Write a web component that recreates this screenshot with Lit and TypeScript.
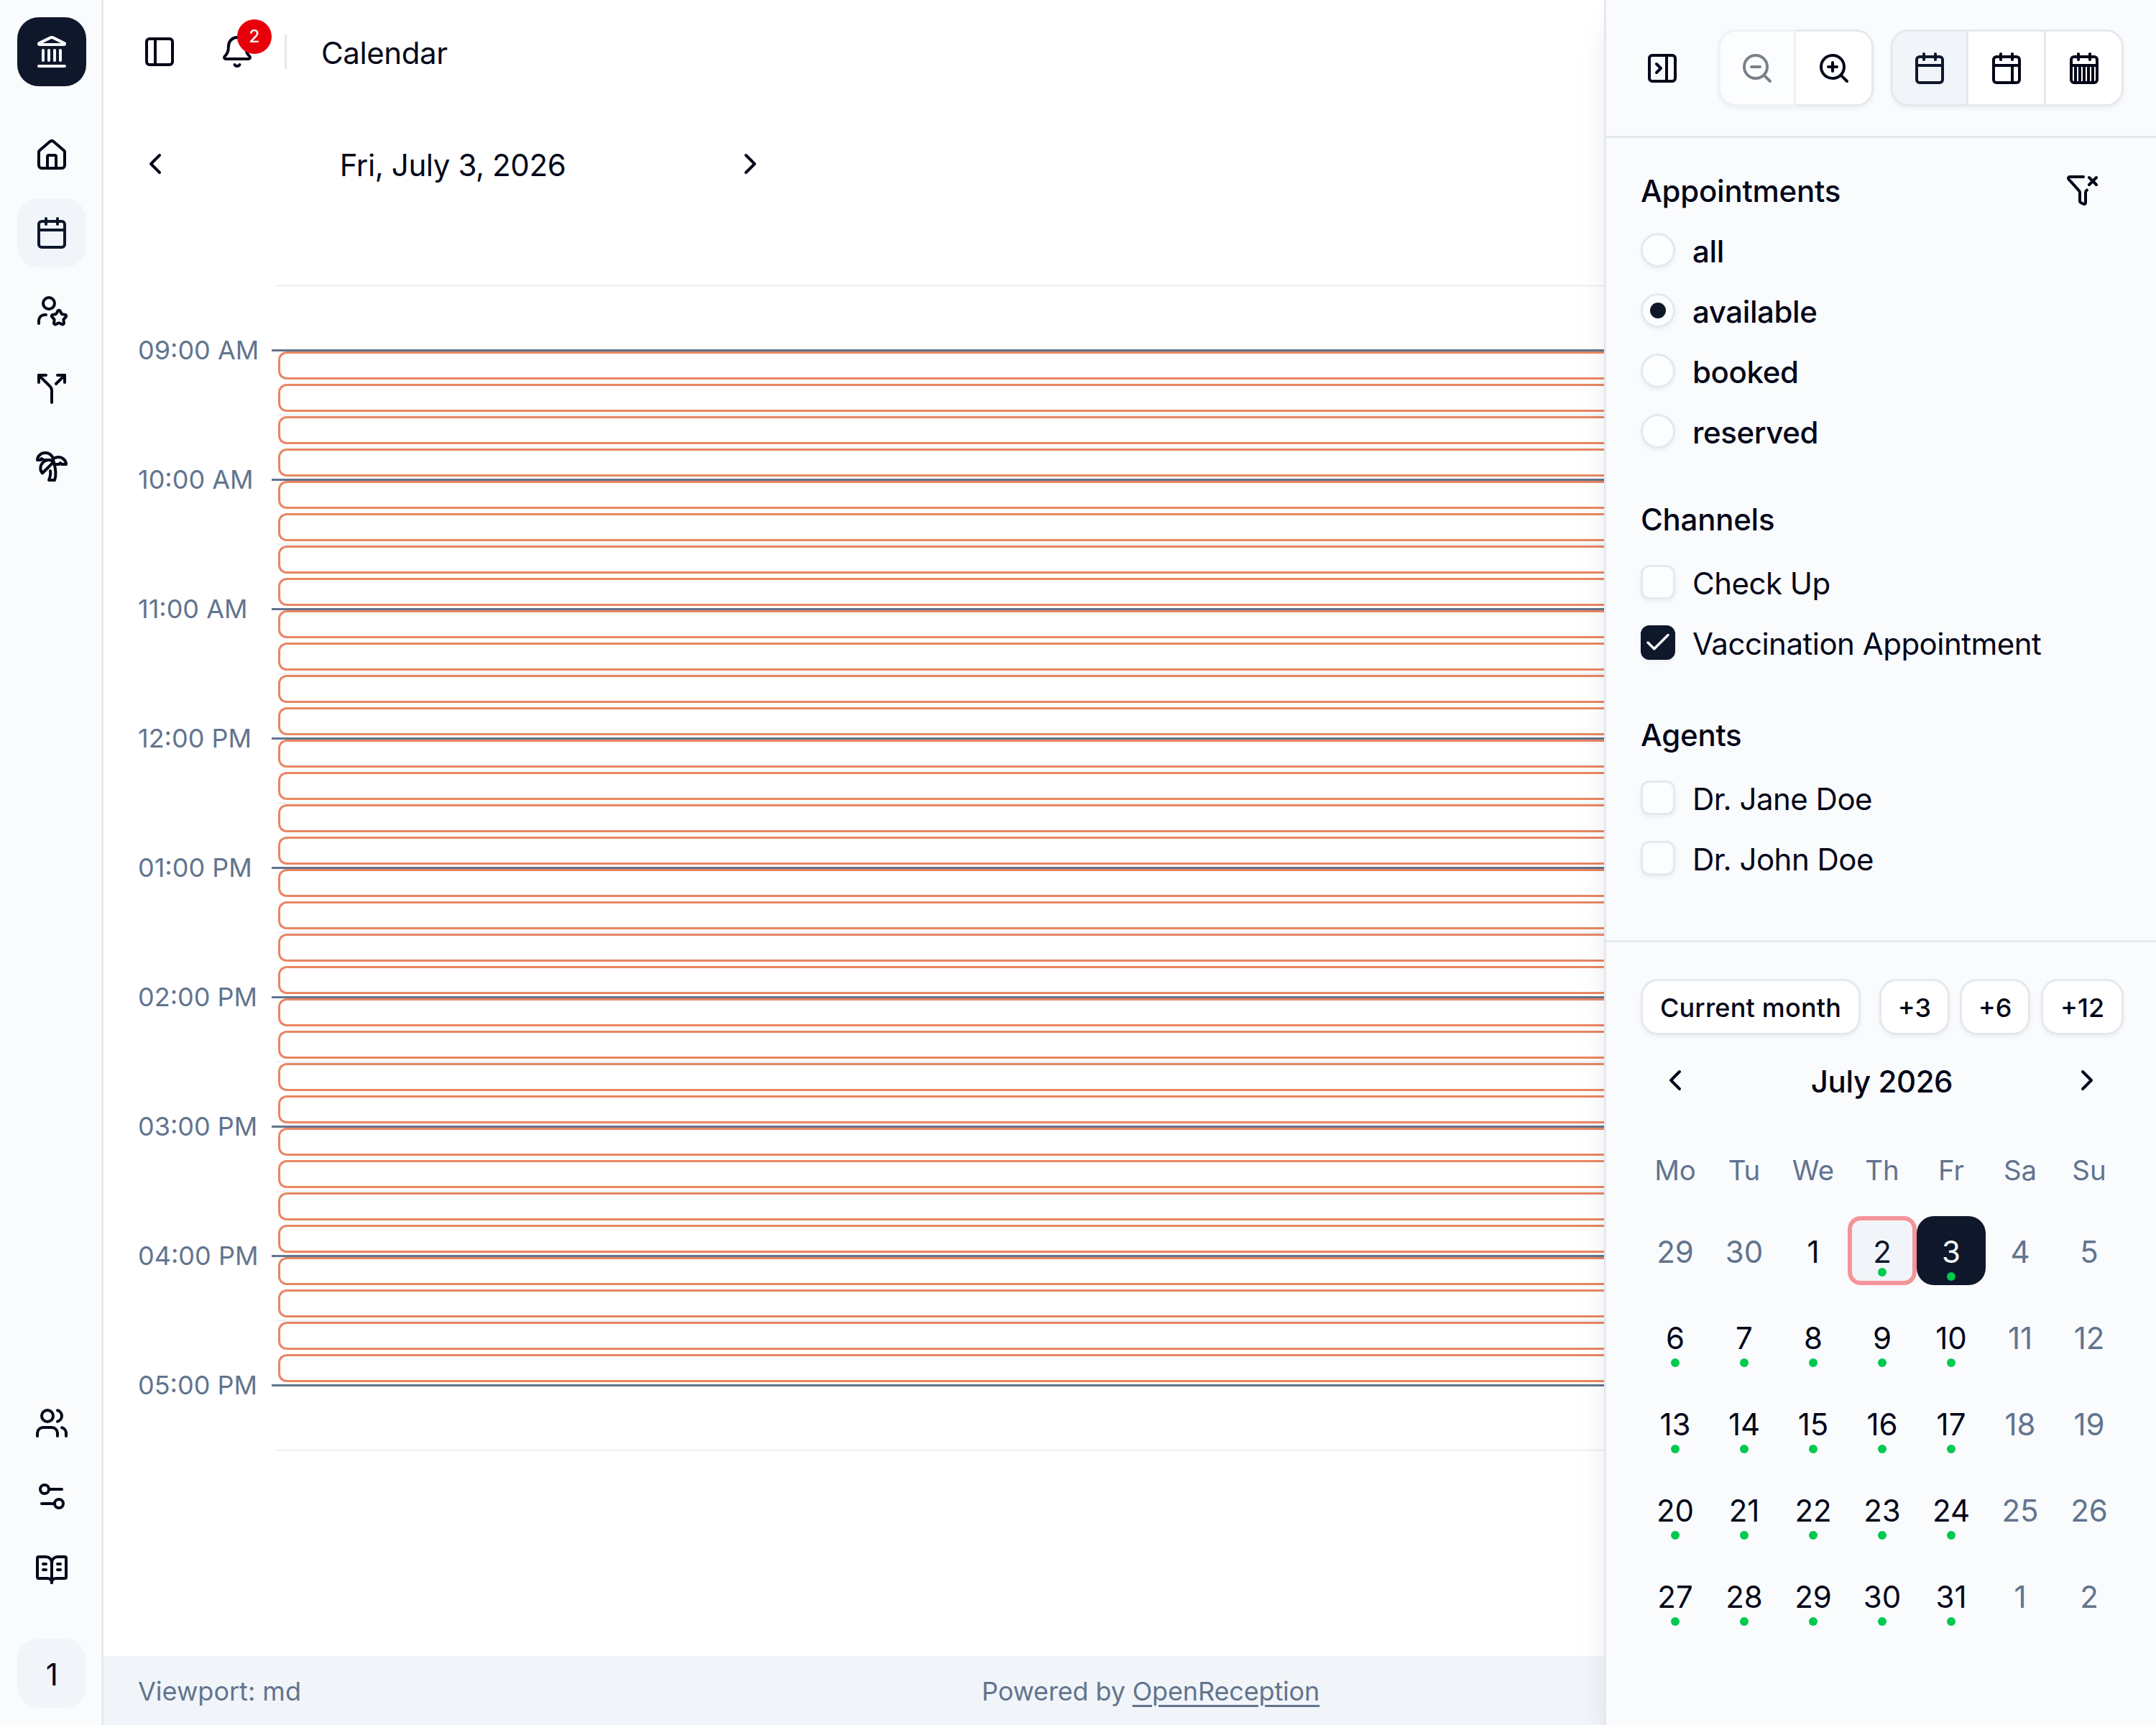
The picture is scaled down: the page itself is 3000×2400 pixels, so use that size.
import { LitElement, html, svg, css, nothing, type SVGTemplateResult } from 'lit';
import { customElement, property } from 'lit/decorators.js';
import { classMap } from 'lit/directives/class-map.js';

const ICONS: Record<string, SVGTemplateResult> = {
  landmark: svg`<path d="M10 18v-7M14 18v-7M18 18v-7M6 18v-7M3 22h18"/><path d="M11.12 2.198a2 2 0 0 1 1.76.006l7.866 3.847c.476.233.31.949-.22.949H3.474c-.53 0-.695-.716-.22-.949z"/>`,
  home: svg`<path d="M15 21v-8a1 1 0 0 0-1-1h-4a1 1 0 0 0-1 1v8"/><path d="M3 10a2 2 0 0 1 .709-1.528l7-5.999a2 2 0 0 1 2.582 0l7 5.999A2 2 0 0 1 21 10v9a2 2 0 0 1-2 2H5a2 2 0 0 1-2-2z"/>`,
  calendar: svg`<path d="M8 2v4M16 2v4M3 10h18"/><rect width="18" height="18" x="3" y="4" rx="2"/>`,
  calendarWeek: svg`<path d="M8 2v4M16 2v4M3 10h18M16 10v12"/><rect width="18" height="18" x="3" y="4" rx="2"/>`,
  calendarMonth: svg`<path d="M8 2v4M16 2v4M3 10h18M6 10v12M9 10v12M12 10v12M15 10v12M18 10v12"/><rect width="18" height="18" x="3" y="4" rx="2"/>`,
  userStar: svg`<path d="M16.051 12.616a1 1 0 0 1 1.909.024l.737 1.452a1 1 0 0 0 .737.535l1.634.256a1 1 0 0 1 .588 1.806l-1.172 1.168a1 1 0 0 0-.282.866l.259 1.613a1 1 0 0 1-1.541 1.134l-1.465-.75a1 1 0 0 0-.912 0l-1.465.75a1 1 0 0 1-1.539-1.133l.258-1.613a1 1 0 0 0-.282-.866l-1.156-1.153a1 1 0 0 1 .572-1.822l1.633-.256a1 1 0 0 0 .737-.535z"/><path d="M8 15H7a4 4 0 0 0-4 4v2"/><circle cx="10" cy="7" r="4"/>`,
  split: svg`<path d="M16 3h5v5M8 3H3v5"/><path d="M12 22v-8.3a4 4 0 0 0-1.172-2.872L3 3M15 9l6-6"/>`,
  palm: svg`<path d="M13 8c0-2.76-2.46-5-5.5-5S2 5.24 2 8h2l1-1 1 1h4"/><path d="M13 7.14A5.82 5.82 0 0 1 16.5 6c3.04 0 5.5 2.24 5.5 5h-3l-1-1-1 1h-3"/><path d="M5.89 9.71c-2.15 2.15-2.3 5.47-.35 7.43l4.24-4.25.7-.7.71-.71 2.12-2.12c-1.95-1.96-5.27-1.8-7.42.35"/><path d="M11 15.5c.5 2.5-.17 4.5-1 6.5h4c2-5.5-.5-12-1-14"/>`,
  users: svg`<path d="M16 21v-2a4 4 0 0 0-4-4H6a4 4 0 0 0-4 4v2M16 3.128a4 4 0 0 1 0 7.744M22 21v-2a4 4 0 0 0-3-3.87"/><circle cx="9" cy="7" r="4"/>`,
  settings: svg`<path d="M14 17H5M19 7h-9"/><circle cx="17" cy="17" r="3"/><circle cx="7" cy="7" r="3"/>`,
  book: svg`<path d="M12 7v14M16 12h2M16 8h2M6 12h2M6 8h2"/><path d="M3 18a1 1 0 0 1-1-1V4a1 1 0 0 1 1-1h5a4 4 0 0 1 4 4 4 4 0 0 1 4-4h5a1 1 0 0 1 1 1v13a1 1 0 0 1-1 1h-6a3 3 0 0 0-3 3 3 3 0 0 0-3-3z"/>`,
  panelLeft: svg`<rect width="18" height="18" x="3" y="3" rx="2"/><path d="M9 3v18"/>`,
  panelClose: svg`<rect width="18" height="18" x="3" y="3" rx="2"/><path d="M15 3v18M8 9l3 3-3 3"/>`,
  bell: svg`<path d="M10.268 21a2 2 0 0 0 3.464 0"/><path d="M3.262 15.326A1 1 0 0 0 4 17h16a1 1 0 0 0 .74-1.673C19.41 13.956 18 12.499 18 8A6 6 0 0 0 6 8c0 4.499-1.411 5.956-2.738 7.326"/>`,
  left: svg`<path d="m15 18-6-6 6-6"/>`,
  right: svg`<path d="m9 18 6-6-6-6"/>`,
  zoomOut: svg`<circle cx="11" cy="11" r="8"/><path d="M21 21l-4.35-4.35M8 11h6"/>`,
  zoomIn: svg`<circle cx="11" cy="11" r="8"/><path d="M21 21l-4.35-4.35M11 8v6M8 11h6"/>`,
  funnelX: svg`<path d="M12.531 3H3a1 1 0 0 0-.742 1.67l7.225 7.989A2 2 0 0 1 10 14v6a1 1 0 0 0 .553.895l2 1A1 1 0 0 0 14 21v-7a2 2 0 0 1 .517-1.341l.427-.473"/><path d="m16.5 3.5 5 5M21.5 3.5l-5 5"/>`,
  check: svg`<path d="M20 6 9 17l-5-5"/>`,
};

const icon = (name: string) => html`<svg class="icon" viewBox="0 0 24 24" fill="none" stroke="currentColor" stroke-width="2" stroke-linecap="round" stroke-linejoin="round">${ICONS[name]}</svg>`;

const base = css`
  * { box-sizing: border-box; }
  :host { color: #020618; font-family: Inter, "Liberation Sans", sans-serif; }
  .icon { display: block; width: 48px; height: 48px; flex: none; }
  .md { font-size: 42px; line-height: 60px; padding-top: 3px; white-space: nowrap; letter-spacing: -0.4px; }
  .sm { font-size: 36px; line-height: 48px; white-space: nowrap; letter-spacing: 0; }
`;

@customElement('app-sidebar')
class AppSidebar extends LitElement {
  static styles = [base, css`
    :host { display: flex; flex-direction: column; width: 144px; height: 2400px; padding: 24px 0 24px 24px; background: #f9fbfd; border-right: 3px solid #e5e9ee; }
    .tile { width: 96px; height: 96px; border-radius: 30px; display: flex; align-items: center; justify-content: center; }
    .brand { background: #0f172b; color: #f8fafc; margin-bottom: 48px; }
    .nav { display: flex; flex-direction: column; gap: 12px; }
    .active { background: #f1f5f9; color: #0f172b; }
    .tools { display: flex; flex-direction: column; gap: 6px; margin-top: auto; margin-bottom: 48px; }
    .tenant { background: #f1f5f9; }
  `];
  render() {
    return html`
      <div class="tile brand">${icon('landmark')}</div>
      <nav class="nav">
        ${['home', 'calendar', 'userStar', 'split', 'palm'].map(
          (n) => html`<div class=${classMap({ tile: true, active: n === 'calendar' })}>${icon(n)}</div>`,
        )}
      </nav>
      <div class="tools">${['users', 'settings', 'book'].map((n) => html`<div class="tile">${icon(n)}</div>`)}</div>
      <div class="tile tenant"><span class="md">1</span></div>
    `;
  }
}

const HOURS = ['09:00 AM', '10:00 AM', '11:00 AM', '12:00 PM', '01:00 PM', '02:00 PM', '03:00 PM', '04:00 PM', '05:00 PM'];

@customElement('day-schedule')
class DaySchedule extends LitElement {
  static styles = [base, css`
    :host { display: flex; padding: 84px 0 0 48px; overflow: hidden; }
    .labels { width: 186px; flex: none; padding-top: 67px; }
    .label { height: 180px; color: #62748e; }
    .lanes { flex: 1; padding-left: 6px; }
    .half { height: 90px; border-top: 3px solid #f1f3f6; display: flex; flex-direction: column; gap: 6px; }
    .hour { border-top-color: #62748e; margin-left: -6px; padding-left: 6px; }
    .slot { height: 39px; flex: none; margin-left: 3px; border: 3px solid #e98662; border-right: 0; border-radius: 12px 0 0 12px; background: #fff; }
  `];
  render() {
    const slots = html`<div class="slot"></div><div class="slot"></div>`;
    return html`
      <div class="labels">${HOURS.map((h) => html`<div class="label sm">${h}</div>`)}</div>
      <div class="lanes">
        <div class="half"></div>
        ${HOURS.map((_, i) => {
          const open = i < HOURS.length - 1;
          return html`<div class="half hour">${open ? slots : nothing}</div><div class="half">${open ? slots : nothing}</div>`;
        })}
      </div>
    `;
  }
}

@customElement('filter-option')
class FilterOption extends LitElement {
  @property() kind = 'check';
  @property() label = '';
  @property({ type: Boolean }) on = false;
  static styles = [base, css`
    :host { display: flex; align-items: center; gap: 24px; height: 48px; }
    .box { width: 48px; height: 48px; flex: none; border: 3px solid #e5e9ee; border-radius: 12px; background: #fcfdfe; box-shadow: 0 3px 6px rgba(0, 0, 0, 0.05); display: flex; align-items: center; justify-content: center; }
    .radio { border-radius: 50%; }
    .ticked { background: #0f172b; border-color: #0f172b; color: #f8fafc; }
    .box .icon { width: 42px; height: 42px; }
    .dot { width: 22px; height: 22px; border-radius: 50%; background: #0f172b; }
    .md { padding-top: 4px; letter-spacing: -0.5px; }
    .strong { font-weight: 500; letter-spacing: -0.4px; }
  `];
  render() {
    const radio = this.kind === 'radio';
    return html`
      <span class=${classMap({ box: true, radio, ticked: this.on && !radio })}>
        ${this.on ? (radio ? html`<span class="dot"></span>` : icon('check')) : nothing}
      </span>
      <span class=${classMap({ md: true, strong: radio })}>${this.label}</span>
    `;
  }
}

@customElement('month-picker')
class MonthPicker extends LitElement {
  static styles = [base, css`
    :host { display: block; padding: 51px 45px 0 48px; }
    .shortcuts { display: flex; gap: 14px; }
    .btn { height: 78px; width: 98px; flex: none; border: 3px solid #e5e9ee; border-radius: 24px; background: #fff; box-shadow: 0 3px 6px rgba(0, 0, 0, 0.05); display: flex; align-items: center; justify-content: center; font-weight: 500; padding-top: 1px; }
    .wide { width: 306px; margin-right: 12px; letter-spacing: 0.2px; }
    .last { width: 115px; margin-left: 1px; }
    .nav { display: flex; justify-content: space-between; align-items: center; height: 48px; margin-top: 39px; padding: 0 27px 0 24px; }
    .nav .md { font-weight: 500; padding-left: 2px; }
    .week { display: grid; grid-template-columns: repeat(7, 96px); justify-items: center; margin-top: 77px; font-size: 38.4px; line-height: 48px; color: #62748e; }
    .days { display: grid; grid-template-columns: repeat(7, 96px); grid-auto-rows: 96px; row-gap: 24px; margin-top: 40px; }
    .day { position: relative; display: flex; align-items: center; justify-content: center; letter-spacing: 0; padding-top: 4px; }
    .muted { color: #62748e; }
    .today { background: #f1f5f9; color: #0f172b; border: 6px solid #f49499; border-radius: 18px; }
    .picked { background: #0f172b; color: #f8fafc; border-radius: 24px; }
    .dot { position: absolute; left: 50%; bottom: 6px; width: 12px; height: 12px; margin-left: -6px; border-radius: 50%; background: #00c950; }
  `];
  render() {
    const days = [29, 30, ...Array.from({ length: 31 }, (_, i) => i + 1), 1, 2];
    return html`
      <div class="shortcuts">
        <div class="btn sm wide">Current month</div>
        <div class="btn sm">+3</div>
        <div class="btn sm">+6</div>
        <div class="btn sm last">+12</div>
      </div>
      <div class="nav">${icon('left')}<span class="md">July 2026</span>${icon('right')}</div>
      <div class="week">${['Mo', 'Tu', 'We', 'Th', 'Fr', 'Sa', 'Su'].map((d) => html`<span>${d}</span>`)}</div>
      <div class="days">
        ${days.map((d, i) => {
          const muted = i < 2 || i % 7 > 4;
          const cls = { day: true, md: true, muted, today: i === 3, picked: i === 4 };
          return html`<div class=${classMap(cls)}>${d}${!muted && i > 2 ? html`<i class="dot"></i>` : nothing}</div>`;
        })}
      </div>
    `;
  }
}

@customElement('side-panel')
class SidePanel extends LitElement {
  static styles = [base, css`
    :host { display: block; width: 768px; height: 2400px; position: relative; background: #f9fbfd; border-left: 3px solid #e5e9ee; box-shadow: 0 30px 45px -9px rgba(0, 0, 0, 0.1), 0 12px 18px -12px rgba(0, 0, 0, 0.1); }
    .top { height: 192px; border-bottom: 3px solid #e5e9ee; display: flex; align-items: center; gap: 24px; padding-left: 24px; }
    .toggle { width: 108px; display: flex; justify-content: center; }
    .group { display: flex; border-radius: 24px; box-shadow: 0 3px 6px rgba(0, 0, 0, 0.05); }
    .item { width: 108px; height: 107px; display: flex; align-items: center; justify-content: center; background: #fff; border: 3px solid #e5e9ee; border-left-width: 0; }
    .item:first-child { border-left-width: 3px; border-radius: 24px 0 0 24px; }
    .item:last-child { border-radius: 0 24px 24px 0; }
    .off { opacity: 0.5; }
    .sel { background: #f1f5f9; color: #0f172b; }
    .filters { height: 1119px; border-bottom: 3px solid #e5e9ee; padding: 48px 78px 0 48px; }
    .head { display: flex; justify-content: space-between; align-items: center; height: 48px; }
    .head .md { font-weight: 500; letter-spacing: -0.25px; }
    .list { display: flex; flex-direction: column; gap: 36px; margin: 41px 0 79px; }
    .radios { margin: 36px 0 73px; }
  `];
  render() {
    return html`
      <div class="top">
        <div class="toggle">${icon('panelClose')}</div>
        <div class="group">
          <div class="item off">${icon('zoomOut')}</div>
          <div class="item">${icon('zoomIn')}</div>
        </div>
        <div class="group">
          <div class="item sel">${icon('calendar')}</div>
          <div class="item">${icon('calendarWeek')}</div>
          <div class="item">${icon('calendarMonth')}</div>
        </div>
      </div>
      <div class="filters">
        <div class="head"><span class="md">Appointments</span>${icon('funnelX')}</div>
        <div class="list radios">
          ${['all', 'available', 'booked', 'reserved'].map(
            (l) => html`<filter-option kind="radio" label=${l} ?on=${l === 'available'}></filter-option>`,
          )}
        </div>
        <div class="head"><span class="md">Channels</span></div>
        <div class="list">
          <filter-option label="Check Up"></filter-option>
          <filter-option label="Vaccination Appointment" on></filter-option>
        </div>
        <div class="head"><span class="md">Agents</span></div>
        <div class="list">
          <filter-option label="Dr. Jane Doe"></filter-option>
          <filter-option label="Dr. John Doe"></filter-option>
        </div>
      </div>
      <month-picker></month-picker>
    `;
  }
}

@customElement('app-root')
class AppRoot extends LitElement {
  static styles = [base, css`
    :host { display: flex; width: 3000px; height: 2400px; overflow: hidden; background: #fff; }
    .main { flex: 1; min-width: 0; display: flex; flex-direction: column; }
    .bar { height: 144px; display: flex; align-items: center; padding-left: 36px; gap: 24px; }
    .btn { position: relative; width: 84px; height: 84px; display: flex; align-items: center; justify-content: center; }
    .badge { position: absolute; left: 42px; top: -3px; width: 48px; height: 48px; border-radius: 50%; background: #e7000b; color: #fff; font-size: 24px; font-weight: 500; line-height: 48px; text-align: center; }
    .sep { width: 3px; height: 48px; background: #e5e9ee; margin-right: 24px; }
    .daynav { height: 168px; width: 972px; padding: 0 48px; display: flex; align-items: center; justify-content: space-between; }
    .daynav .md { padding-top: 4px; }
    .schedule { flex: 1; min-height: 0; }
    .foot { height: 96px; background: #f1f5f9; color: #62748e; display: flex; align-items: center; padding: 1px 0 0 48px; }
    .view { width: 1174px; }
    .credit { letter-spacing: -0.15px; }
    .link { text-decoration: underline; text-decoration-thickness: 3px; text-underline-offset: 6px; }
  `];
  render() {
    return html`
      <app-sidebar></app-sidebar>
      <div class="main">
        <header class="bar">
          <div class="btn">${icon('panelLeft')}</div>
          <div class="btn">${icon('bell')}<span class="badge">2</span></div>
          <div class="sep"></div>
          <span class="md">Calendar</span>
        </header>
        <div class="daynav">${icon('left')}<span class="md">Fri, July 3, 2026</span>${icon('right')}</div>
        <day-schedule class="schedule"></day-schedule>
        <footer class="foot sm">
          <span class="view">Viewport: md</span>
          <span class="credit">Powered by <span class="link">OpenReception</span></span>
        </footer>
      </div>
      <side-panel></side-panel>
    `;
  }
}
